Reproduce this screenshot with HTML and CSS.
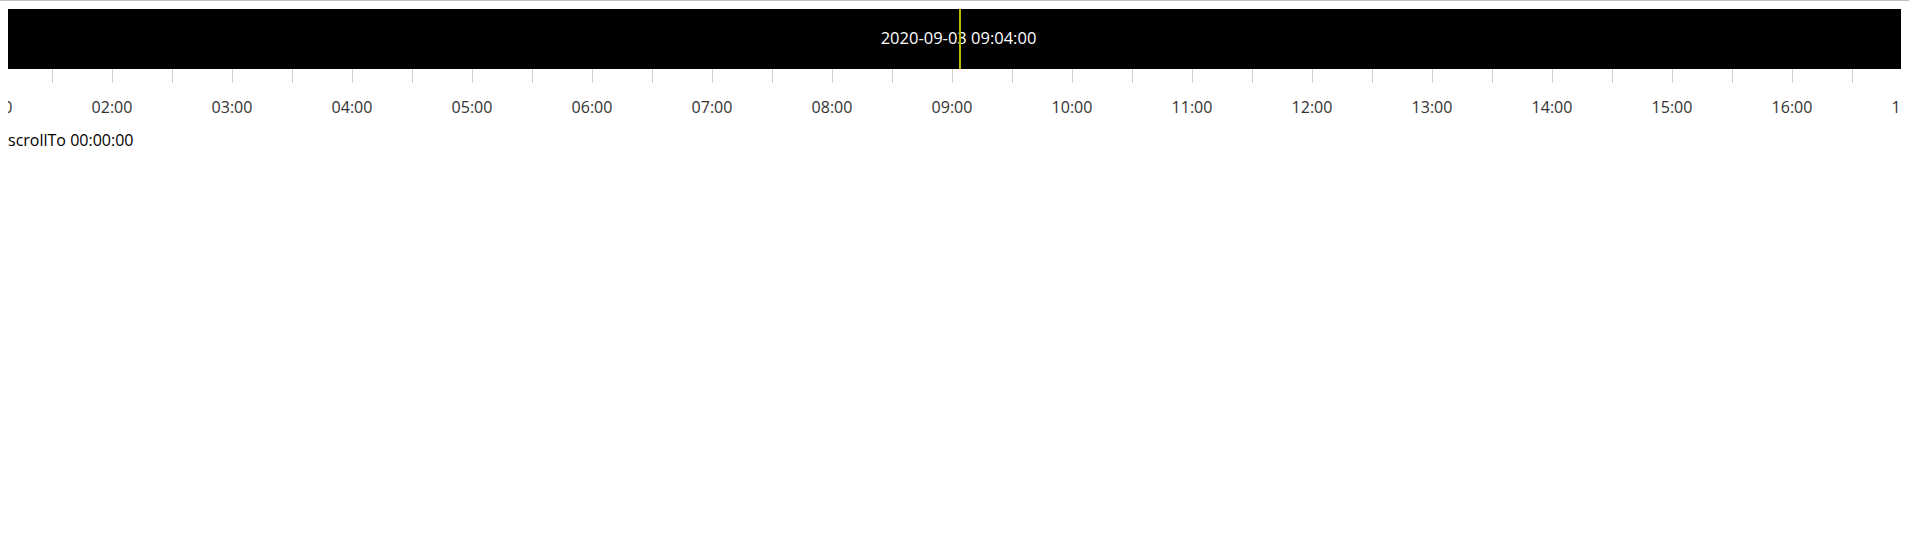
FILE: index.html
```html
<!DOCTYPE html>
<html lang="en">
<head>
    <meta charset="UTF-8">
    <meta name="viewport" content="width=device-width, initial-scale=1.0">
    <title>Timeline</title>
    <link rel="stylesheet" href="styles.css">
</head>
<body>
    <div class="timeline">
        <div class="bar">
            <span class="current" id="current">2020-09-03 09:04:00</span>
            <div class="cursor" id="cursor"></div>
        </div>
        <div class="ticks" id="ticks"></div>
        <div class="labels" id="labels"></div>
    </div>
    <div class="status" id="status">scrollTo 00:00:00</div>

    <script>
        const PX_PER_HOUR = 120;
        const ZERO_X = -136; // where 00:00 sits inside the bar

        function pad(n) {
            return n < 10 ? '0' + n : '' + n;
        }

        function buildRuler() {
            const ticks = document.getElementById('ticks');
            const labels = document.getElementById('labels');

            // half hour ticks, starting at 01:00
            for (let i = 0; i < 34; i++) {
                const tick = document.createElement('div');
                tick.className = 'tick';
                ticks.appendChild(tick);
            }

            for (let h = 1; h <= 18; h++) {
                const label = document.createElement('div');
                label.className = 'label';
                label.textContent = pad(h) + ':00';
                labels.appendChild(label);
            }
        }

        function placeCursor(hours, minutes) {
            const x = ZERO_X + (hours * 60 + minutes) * PX_PER_HOUR / 60;
            document.getElementById('cursor').style.left = (x - 1) + 'px';
        }

        buildRuler();
        placeCursor(9, 4);
    </script>
</body>
</html>
```

FILE: styles.css
```css
html {
    border-top: 1px solid #bcc2c2;
}
body {
    margin: 8px;
    font-family: "Open Sans", "Noto Sans", sans-serif;
    font-size: 16px;
    color: #000;
}
.timeline {
    margin-right: -8px;
    overflow: hidden;
}
.bar {
    position: relative;
    height: 60px;
    background-color: #000;
    color: #fff;
    display: flex;
    align-items: center;
    justify-content: center;
}
.current {
    font-size: 16.5px;
    line-height: 20px;
    margin-top: -3px;
}
.cursor {
    position: absolute;
    top: 0;
    bottom: 0;
    width: 2px;
    background-color: #b8b800;
}
.ticks {
    display: flex;
    height: 14px;
    margin-left: -16px;
}
.tick {
    flex: none;
    width: 60px;
    border-left: 1px solid #d0d0d0;
    box-sizing: border-box;
}
.labels {
    display: flex;
    margin-left: -76px;
    padding-top: 14px;
    line-height: 20px;
    color: #333;
}
.label {
    flex: none;
    width: 120px;
    text-align: center;
}
.status {
    margin-top: 13px;
    line-height: 20px;
}
```
